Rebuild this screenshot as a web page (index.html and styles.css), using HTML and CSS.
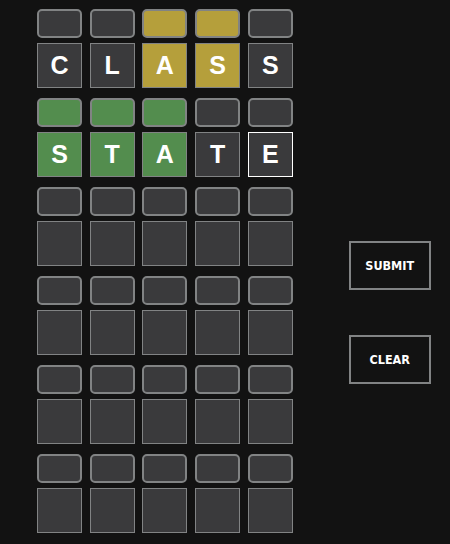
FILE: index.html
```html
<!DOCTYPE html>
<html>
<head>
<meta charset="utf-8">
<link rel="stylesheet" href="styles.css">
</head>
<body>
<div class="app">
  <div class="board">
    <div class="row">
      <div class="hints"><div class="hint"></div><div class="hint"></div><div class="hint yellow"></div><div class="hint yellow"></div><div class="hint"></div></div>
      <div class="tiles"><div class="tile">C</div><div class="tile">L</div><div class="tile yellow">A</div><div class="tile yellow">S</div><div class="tile">S</div></div>
    </div>
    <div class="row">
      <div class="hints"><div class="hint green"></div><div class="hint green"></div><div class="hint green"></div><div class="hint"></div><div class="hint"></div></div>
      <div class="tiles"><div class="tile green">S</div><div class="tile green">T</div><div class="tile green">A</div><div class="tile">T</div><div class="tile active">E</div></div>
    </div>
    <div class="row">
      <div class="hints"><div class="hint"></div><div class="hint"></div><div class="hint"></div><div class="hint"></div><div class="hint"></div></div>
      <div class="tiles"><div class="tile"></div><div class="tile"></div><div class="tile"></div><div class="tile"></div><div class="tile"></div></div>
    </div>
    <div class="row">
      <div class="hints"><div class="hint"></div><div class="hint"></div><div class="hint"></div><div class="hint"></div><div class="hint"></div></div>
      <div class="tiles"><div class="tile"></div><div class="tile"></div><div class="tile"></div><div class="tile"></div><div class="tile"></div></div>
    </div>
    <div class="row">
      <div class="hints"><div class="hint"></div><div class="hint"></div><div class="hint"></div><div class="hint"></div><div class="hint"></div></div>
      <div class="tiles"><div class="tile"></div><div class="tile"></div><div class="tile"></div><div class="tile"></div><div class="tile"></div></div>
    </div>
    <div class="row">
      <div class="hints"><div class="hint"></div><div class="hint"></div><div class="hint"></div><div class="hint"></div><div class="hint"></div></div>
      <div class="tiles"><div class="tile"></div><div class="tile"></div><div class="tile"></div><div class="tile"></div><div class="tile"></div></div>
    </div>
  </div>
  <div class="controls">
    <button class="btn">SUBMIT</button>
    <button class="btn">CLEAR</button>
  </div>
</div>
</body>
</html>
```
FILE: styles.css
```css
html, body {
  margin: 0;
  padding: 0;
  background: #121212;
  height: 100%;
}
.app {
  display: flex;
  align-items: flex-start;
  padding: 9px 0 0 37px;
}
.board {
  display: flex;
  flex-direction: column;
  gap: 10px;
}
.row {
  display: flex;
  flex-direction: column;
  gap: 5px;
}
.hints, .tiles {
  display: flex;
  gap: 7.7px;
}
.hint {
  box-sizing: border-box;
  width: 45px;
  height: 29px;
  background: #3a3a3c;
  border: 2px solid #818384;
  border-radius: 5px;
}
.tile {
  box-sizing: border-box;
  width: 45px;
  height: 45px;
  background: #3a3a3c;
  border: 1px solid #818384;
  color: #fff;
  font-family: "Liberation Sans", Arial, sans-serif;
  font-weight: bold;
  font-size: 25px;
  display: flex;
  align-items: center;
  justify-content: center;
}
.yellow { background: #b59f3b; }
.green { background: #538d4e; }
.tile.active { border-color: #fff; }
.controls {
  display: flex;
  flex-direction: column;
  gap: 45px;
  margin: 232px 0 0 56px;
}
.btn {
  box-sizing: border-box;
  width: 82px;
  height: 49px;
  background: #121212;
  border: 2px solid #818384;
  color: #fff;
  font-family: "DejaVu Sans Condensed", "DejaVu Sans", sans-serif;
  font-weight: bold;
  font-size: 12.5px;
  padding: 0;
}
```
